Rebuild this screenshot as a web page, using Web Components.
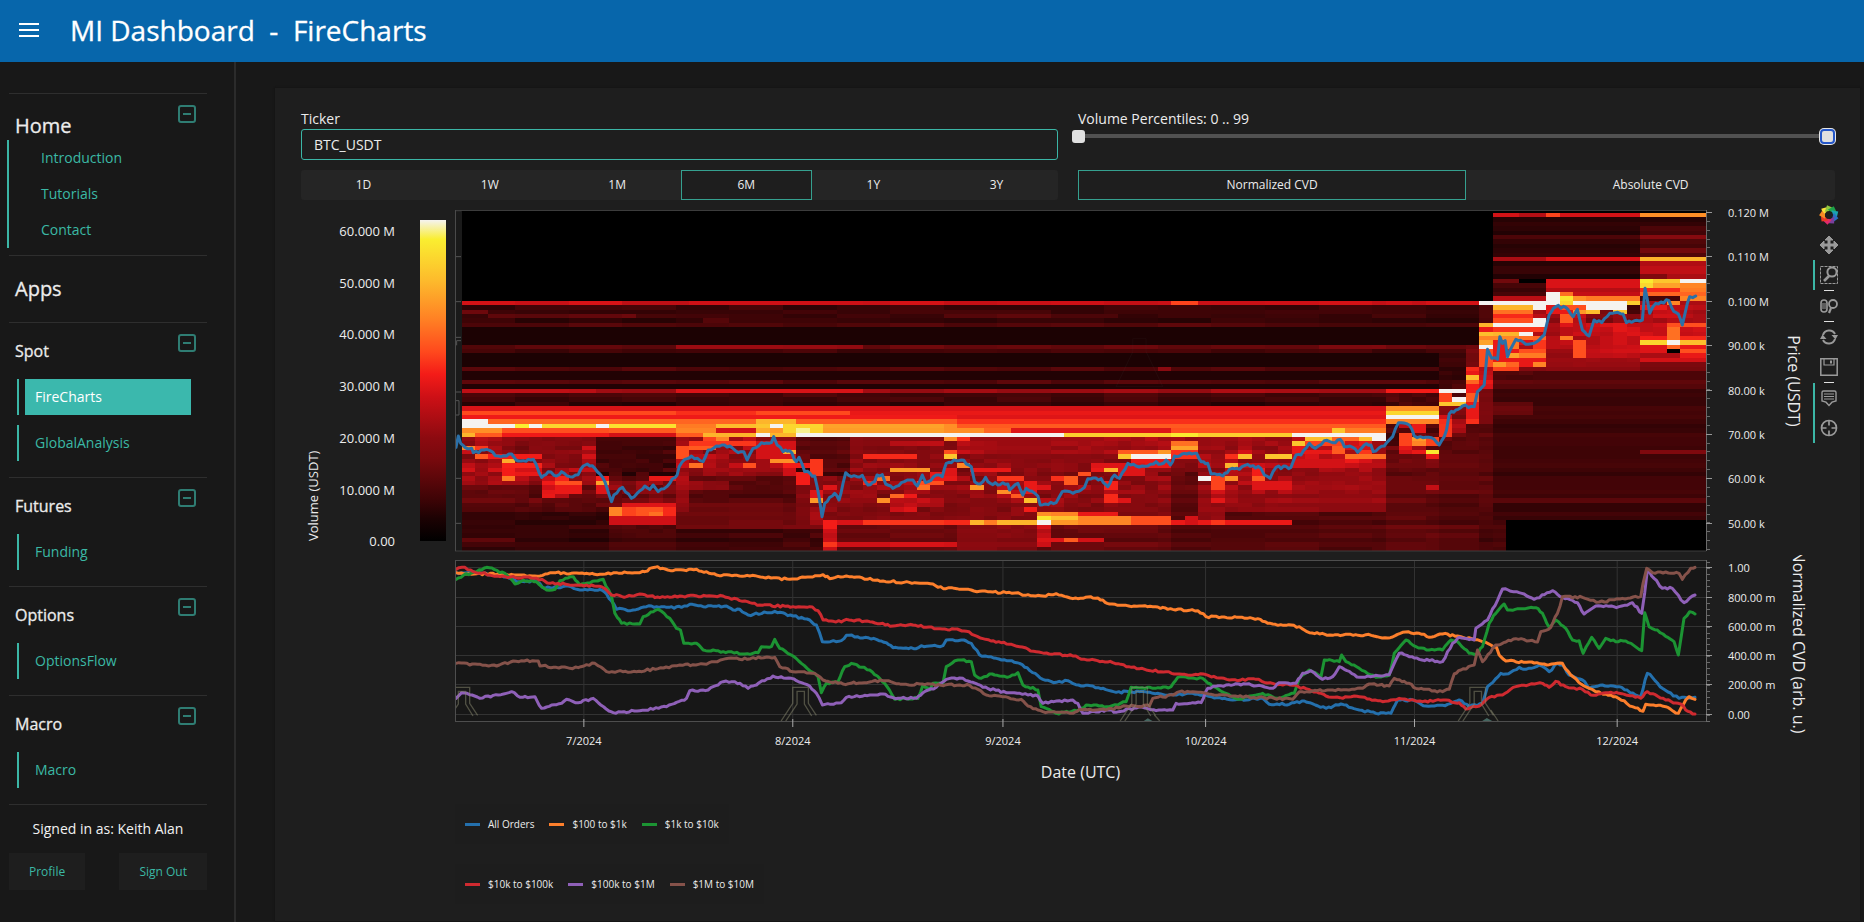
<!DOCTYPE html>
<html lang="en">
<head>
<meta charset="utf-8">
<title>MI Dashboard - FireCharts</title>
<style>
    html, body { height: 100%; }
    body {
        margin: 0;
        background: #181818;
        color: #ececec;
        font-family: "Open Sans", "Noto Sans", sans-serif;
        font-size: 14px;
        line-height: 20px;
        overflow: hidden;
        --accent: #3bb6a6;
        --surface: #1e1e1e;
        --raised: #252525;
        --rule: #2e2e2e;
    }
</style>
</head>
<body>
<mi-dashboard>
    <app-header slot="header" app="MI Dashboard" page="FireCharts"></app-header>
    <nav-sidebar slot="sidebar">
        <nav-section size="large" heading="Home">
            <nav-link>Introduction</nav-link>
            <nav-link>Tutorials</nav-link>
            <nav-link>Contact</nav-link>
        </nav-section>
        <nav-title>Apps</nav-title>
        <nav-section heading="Spot">
            <nav-link active>FireCharts</nav-link>
            <nav-link>GlobalAnalysis</nav-link>
        </nav-section>
        <nav-section heading="Futures"><nav-link>Funding</nav-link></nav-section>
        <nav-section heading="Options"><nav-link>OptionsFlow</nav-link></nav-section>
        <nav-section heading="Macro"><nav-link>Macro</nav-link></nav-section>
        <user-panel slot="footer" user="Keith Alan"></user-panel>
    </nav-sidebar>
    <div style="display: contents">
        <chart-controls>
            <ticker-input slot="left" value="BTC_USDT"></ticker-input>
            <percentile-slider slot="right" low="0" high="99"></percentile-slider>
            <radio-buttons slot="left" options="1D,1W,1M,6M,1Y,3Y" value="6M"></radio-buttons>
            <radio-buttons slot="right" options="Normalized CVD,Absolute CVD" value="Normalized CVD"></radio-buttons>
        </chart-controls>
        <fire-chart></fire-chart>
    </div>
</mi-dashboard>

<script>
class BaseElement extends HTMLElement {
    constructor() {
        super();
        this.attachShadow({ mode: 'open' });
    }

    connectedCallback() {
        this.shadowRoot.innerHTML = this.render();
        this.ready();
    }

    ready() {}
}

// ---------- page shell ----------

class MiDashboard extends BaseElement {
    render() {
        return `
            <style>
                :host { display: flex; flex-direction: column; height: 100vh; }
                .body { display: flex; flex: 1; min-height: 0; }
                main { flex: 1; min-width: 0; padding: 26px 4px 0 39px; }
                .card {
                    background: var(--surface);
                    padding-top: 20px;
                    height: calc(100% - 21px);
                    box-shadow: 0 0 2px #111;
                }
            </style>
            <slot name="header"></slot>
            <div class="body">
                <slot name="sidebar"></slot>
                <main><div class="card"><slot></slot></div></main>
            </div>`;
    }
}

class AppHeader extends BaseElement {
    render() {
        return `
            <style>
                :host { display: block; }
                header {
                    display: flex;
                    align-items: center;
                    height: 60px;
                    padding: 0 0 2px 14px;
                    background: #0766ab;
                    color: #fff;
                }
                button { border: 0; background: none; padding: 0; width: 30px; height: 30px; display: grid; place-items: center; }
                h1 { margin: 0 0 0 26px; font-size: 28px; line-height: 40px; font-weight: 400; white-space: pre; -webkit-text-stroke: 0.3px; }
            </style>
            <header>
                <button aria-label="Toggle sidebar">
                    <svg width="20" height="14" stroke="#fff" stroke-width="2"><path d="M0 1h20M0 7h20M0 13h20"/></svg>
                </button>
                <h1>${this.getAttribute('app')}  -  ${this.getAttribute('page')}</h1>
            </header>`;
    }
}

// ---------- sidebar ----------

class NavSidebar extends BaseElement {
    render() {
        return `
            <style>
                :host {
                    display: block;
                    box-sizing: border-box;
                    width: 236px;
                    padding: 31px 27px 0 9px;
                    border-right: 2px solid #2b2b2b;
                }
            </style>
            <nav><slot></slot></nav>
            <slot name="footer"></slot>`;
    }
}

class NavTitle extends BaseElement {
    render() {
        return `
            <style>
                :host { display: block; border-top: 1px solid var(--rule); }
                h2 { margin: 0; padding-left: 6px; font-size: 20px; font-weight: 400; line-height: 66px; -webkit-text-stroke: 0.3px; }
            </style>
            <h2><slot></slot></h2>`;
    }
}

class NavSection extends BaseElement {
    render() {
        return `
            <style>
                :host { display: block; border-top: 1px solid var(--rule); }
                .head { display: flex; justify-content: space-between; height: 56px; padding: 0 11px 0 6px; }
                h3 { margin: 0; font-size: 16px; font-weight: 400; line-height: 56px; -webkit-text-stroke: 0.3px; }
                button {
                    width: 18px; height: 18px; margin-top: 11px; padding: 0;
                    display: grid; place-items: center;
                    background: none; border: 2px solid #2f7d73; border-radius: 3px;
                }
                button::before { content: ""; width: 8px; height: 2px; background: #2f7d73; }
                .links { display: flex; flex-direction: column; gap: 10px; padding: 0 16px 16px 8px; }

                :host([size="large"]) .head { height: 46px; }
                :host([size="large"]) h3 { font-size: 20px; line-height: 64px; }
                :host([size="large"]) .links {
                    gap: 0; margin: 0 0 7px -2px; padding: 0 0 0 14px;
                    border-left: 2px solid var(--accent);
                    --bar: transparent;
                }
            </style>
            <div class="head">
                <h3>${this.getAttribute('heading')}</h3>
                <button aria-label="Collapse ${this.getAttribute('heading')}"></button>
            </div>
            <div class="links"><slot></slot></div>`;
    }
}

class NavLink extends BaseElement {
    render() {
        return `
            <style>
                :host { display: block; border-left: 2px solid var(--bar, var(--accent)); padding-left: 6px; }
                a { display: block; padding: 0 10px; line-height: 36px; color: #3bb8a5; text-decoration: none; }
                :host([active]) a { background: #3bb8ad; color: #fff; }
            </style>
            <a href="#"><slot></slot></a>`;
    }
}

class UserPanel extends BaseElement {
    render() {
        return `
            <style>
                :host { display: block; border-top: 1px solid var(--rule); text-align: center; }
                p { margin: 14px 0; color: #f2f2f2; }
                div { display: flex; justify-content: space-between; }
                a {
                    padding: 0 20px;
                    font-size: 12px; line-height: 37px;
                    background: var(--surface); color: #3bb8a5; text-decoration: none;
                }
            </style>
            <p>Signed in as: ${this.getAttribute('user')}</p>
            <div><a href="#">Profile</a><a href="#">Sign Out</a></div>`;
    }
}

// ---------- controls ----------

class ChartControls extends BaseElement {
    render() {
        return `
            <style>
                :host { display: flex; gap: 20px; padding: 0 25px 0 26px; }
                .col { flex: 1; min-width: 0; display: flex; flex-direction: column; justify-content: space-between; height: 92px; }
            </style>
            <div class="col"><slot name="left"></slot></div>
            <div class="col"><slot name="right"></slot></div>`;
    }
}

class TickerInput extends BaseElement {
    render() {
        return `
            <style>
                :host { display: block; }
                label { display: block; line-height: 21px; }
                input {
                    box-sizing: border-box; width: 100%; height: 31px;
                    padding: 0 12px;
                    background: var(--surface); color: inherit; font: inherit;
                    border: 1px solid var(--accent); border-radius: 3px;
                }
            </style>
            <label for="ticker">Ticker</label>
            <input id="ticker" value="${this.getAttribute('value')}">`;
    }
}

class PercentileSlider extends BaseElement {
    render() {
        const low = this.getAttribute('low');
        const high = this.getAttribute('high');
        return `
            <style>
                :host { display: block; }
                label { display: block; line-height: 21px; }
                .track {
                    display: grid; align-items: center; height: 13px; margin: 0 0 0 -6px;
                    background: linear-gradient(#515151, #515151) center / calc(100% - 12px) 4px no-repeat;
                }
                input {
                    grid-area: 1 / 1; width: 100%; height: 15px; margin: 0;
                    appearance: none; background: none; pointer-events: none;
                }
                input::-webkit-slider-thumb {
                    appearance: none; pointer-events: auto;
                    width: 13px; height: 13px; border-radius: 3px; background: #e0e0e0;
                }
                input.high::-webkit-slider-thumb {
                    width: 15px; height: 15px;
                    border: 2px solid #2456c8;
                    border-radius: 4px;
                    box-shadow: 0 0 0 1px #e8e8e8;
                }
            </style>
            <label for="low">Volume Percentiles: ${low} .. ${high}</label>
            <div class="track">
                <input id="low" type="range" min="0" max="99" value="${low}">
                <input class="high" type="range" min="0" max="99" value="${high}" aria-label="Upper percentile">
            </div>`;
    }
}

class RadioButtons extends BaseElement {
    render() {
        const value = this.getAttribute('value');
        return `
            <style>
                :host { display: flex; height: 30px; background: var(--raised); border-radius: 3px; }
                button {
                    flex: 1 1 auto; padding: 0 10px;
                    background: none; border: 1px solid transparent;
                    color: inherit; font: inherit; font-size: 12px; line-height: 28px;
                }
                button[aria-pressed="true"] { background: var(--surface); border-color: #35a08f; padding: 0 12px; }
            </style>
            ${this.getAttribute('options').split(',').map(o => `
                <button aria-pressed="${o === value}">${o}</button>`).join('')}`;
    }

    ready() {
        const buttons = this.shadowRoot.querySelectorAll('button');
        buttons.forEach(b => b.addEventListener('click', () => {
            buttons.forEach(x => x.setAttribute('aria-pressed', x === b));
        }));
    }
}

// ---------- chart data ----------

// Each track is a list of chunks: x offset, y offset, "x,y x,y ..."
const LINES = {
    price: { color: '#2b70a8', data: [
        [-45, -30, '48,742 55,708 62,730 75,742 95,745 100,758 140,748 175,768 215,762 235,783 280,778 305,832 325,815 350,828 365,815 390,830 415,824 430,798 442,792 465,805 495,845 515,905 522,885 548,862 575,895 615,858 630,868 640,855 655,875 690,850 712,825 718,800 735,778 755,768 790,785 805,750 830,738 870,738 895,758 912,755 922,780 940,745 965,728 995,728 1002,710 1012,735 1030,755 1050,752 1070,785 1078,772 1095,815 1125,828 1138,890 1147,950 1155,910 1185,880 1198,900 1210,850 1218,818 1235,830 1268,826 1285,855 1305,845 1312,825 1328,824 1338,852 1360,865 1385,848 1420,840 1433,858 1448,825 1458,848 1490,825 1508,830 1520,790 1550,782'],
        [1455, -30, '65,780 95,800 105,845 122,852 138,832 152,850 205,852 210,870 235,850 250,885 260,865 295,888 302,915 350,908 368,875 400,880 435,862 445,836 485,836 505,860 525,825 540,835 565,790 590,798 625,798 650,785 665,792 680,780 693,795 705,768 735,760 772,760 785,785 805,790 815,822 850,828 870,808 900,808 925,793 965,806 975,825 992,835 1010,802 1055,802 1070,765 1085,765 1110,730 1128,745 1155,722 1180,728 1203,718 1215,740 1240,742 1255,757 1275,735 1295,735 1302,755 1335,738 1360,710 1378,668 1410,675 1425,708 1460,712 1485,718 1500,735 1515,710 1522,690 1530,642 1550,630'],
        [2895, -30, '130,618 165,620 175,575 195,555 205,448 218,475 235,478 242,410 250,430 258,422 265,470 290,418 320,433 345,430 375,405 390,345 410,320 440,322 462,350 475,328 490,390 510,408 525,360 548,368 572,340 612,342 622,368 670,360 678,265 692,340 710,310 750,302 765,335 778,342 790,375 805,310 812,290 830,288'],
    ] },
    all: { label: 'All Orders', color: '#2470ad', data: [
        [-45, -30, '48,68 130,70 200,80 230,95 285,92 315,115 385,108 420,120 480,118 500,132 530,178 580,180 620,170 680,172 725,172 750,163 790,170 860,168 880,180 900,178 925,195 1005,184 1060,198 1110,210 1130,225 1148,275 1205,272 1220,256 1310,268 1340,278 1360,293 1430,296 1445,287 1510,287 1520,270 1555,272'],
        [1455, -30, '65,270 95,280 120,315 170,325 240,340 310,388 350,397 385,392 425,408 445,406 530,427 600,425 680,436 760,430 880,450 970,445 990,463 1050,463 1095,453 1160,475 1205,462 1260,480 1310,490 1355,490 1375,450 1420,450 1460,468 1510,466 1555,452'],
        [2895, -60, '120,480 150,500 190,490 205,440 245,400 260,402 300,382 320,388 360,375 390,395 415,370 430,375 450,405 490,420 510,445 550,435 600,440 665,470 685,400 700,412 730,445 780,475 828,472'],
    ] },
    s100: { label: '$100 to $1k', color: '#fd7f2c', data: [
        [-45, -30, '48,68 230,75 300,78 340,68 480,73 530,68 600,68 645,52 700,62 770,58 830,75 930,78 1050,88 1150,74 1170,86 1220,78 1330,93 1480,102 1495,112 1560,118'],
        [1455, -30, '70,118 120,124 200,128 235,128 250,136 310,138 350,131 400,146 445,141 490,150 510,162 560,166 640,170 700,178 775,182 800,200 940,205 1000,222 1080,230 1110,248 1180,256 1280,254 1345,264 1390,247 1440,250 1470,262 1510,252 1555,258'],
        [2895, -60, '125,290 190,305 215,315 232,322 240,345 260,363 330,366 390,374 430,370 455,405 495,438 530,455 590,470 640,500 672,514 680,493 740,500 778,520 800,480 810,470 828,478'],
    ] },
    s1k: { label: '$1k to $10k', color: '#1c9433', data: [
        [-45, -30, '48,88 70,76 110,65 140,52 195,70 225,102 250,90 290,95 320,120 345,118 360,92 400,80 420,105 480,90 490,88 515,140 525,190 545,220 600,222 610,200 655,178 690,205 710,235 722,240 732,280 770,280 790,300 850,305 915,312 955,308 965,290 995,290 1005,268 1020,295 1060,318 1085,340 1120,368 1135,380 1145,428 1160,400 1195,395 1215,350 1235,340 1290,360 1335,400 1365,448 1435,445 1450,405 1470,420 1480,400 1510,400 1520,350 1555,330'],
        [1455, -30, '65,330 95,335 105,375 125,385 150,372 210,380 235,368 250,405 295,420 305,470 350,490 420,480 440,465 510,470 560,455 575,412 640,415 695,410 715,382 790,385 820,410 860,430 900,448 970,430 1010,445 1065,430 1080,385 1110,360 1145,380 1155,330 1200,335 1207,315 1220,335 1260,355 1310,382 1350,375 1365,310 1400,270 1430,290 1470,300 1510,300 1535,270 1555,275'],
        [2895, -60, '120,310 150,340 170,345 190,320 210,250 230,220 255,192 265,210 350,203 370,220 390,262 410,240 440,265 460,300 480,302 492,340 518,292 540,325 560,295 590,305 620,303 668,332 677,218 690,260 715,270 765,305 778,345 795,235 812,215 828,222'],
    ] },
    s10k: { label: '$10k to $100k', color: '#cf2a30', data: [
        [-45, -30, '48,58 75,52 100,65 180,80 290,85 330,100 440,105 485,110 515,135 560,140 600,132 660,143 720,138 800,138 850,138 900,152 960,165 1060,170 1110,170 1135,182 1150,210 1205,216 1220,208 1290,215 1360,228 1420,225 1500,236 1560,240'],
        [1455, -30, '80,244 130,266 240,290 290,305 400,318 435,328 520,338 600,356 720,372 800,374 870,390 950,388 1000,400 1060,406 1100,416 1160,438 1210,445 1245,438 1330,455 1380,445 1450,455 1520,450 1555,460'],
        [2895, -60, '120,488 140,507 185,495 210,472 250,465 290,440 370,430 390,442 410,424 440,440 490,448 515,465 560,458 600,460 665,475 685,455 740,480 785,492 800,510 828,522'],
    ] },
    s100k: { label: '$100k to $1M', color: '#8f60b8', data: [
        [-45, -30, '48,445 65,428 120,445 215,425 240,442 285,440 305,475 365,460 380,448 415,458 460,445 500,478 520,488 600,482 680,470 740,445 750,422 805,420 850,395 885,395 925,415 1000,378 1055,385 1085,398 1110,408 1130,430 1148,465 1205,458 1220,442 1330,432 1360,443 1430,445 1450,428 1490,412 1520,388 1560,384'],
        [1455, -30, '70,385 130,412 200,428 265,435 295,438 310,460 400,450 415,460 430,490 510,480 530,487 600,470 650,482 700,480 710,460 785,458 805,415 860,405 920,402 1000,415 1020,398 1070,400 1090,370 1115,362 1150,388 1180,380 1200,350 1260,382 1350,374 1380,310 1440,328 1510,335 1540,280 1555,265'],
        [2895, -60, '120,292 165,300 170,265 205,240 250,147 300,158 345,178 400,152 430,172 475,188 495,222 530,198 600,200 640,188 668,220 685,90 705,115 730,145 760,145 795,188 828,165'],
    ] },
    s1m: { label: '$1M to $10M', color: '#85524a', data: [
        [-45, -30, '48,340 170,348 220,333 295,333 300,348 390,355 465,340 500,365 590,365 720,345 800,343 850,328 1005,322 1020,350 1060,365 1125,370 1150,390 1210,402 1330,392 1400,403 1560,405'],
        [1455, -30, '90,406 140,435 245,448 265,468 310,485 400,490 420,478 500,480 560,468 630,468 640,445 700,435 720,425 800,430 880,438 1060,448 1080,425 1180,420 1270,415 1290,402 1350,408 1365,385 1410,400 1430,415 1510,425 1530,418 1545,372'],
        [2895, -60, '125,390 165,375 175,330 190,365 230,315 290,296 355,306 365,275 395,262 415,220 430,170 490,172 540,186 665,170 672,130 683,85 700,98 780,100 790,118 815,85 828,82'],
    ] },
};

const COLS = 93;
const ROWS = 78;

// Order book intensity, 0..100: [first col, end col, first row, end row, value].
// Later entries paint over earlier ones. A row is 1000 USDT, row 0 is 119-120k.
const HEAT = [
    // far book
    [0,77,20,21,42],[17,30,20,21,45],[53,55,20,21,58],[69,71,20,21,45],[0,77,21,24,11],[0,2,22,23,21],[2,13,23,24,19],[36,49,23,24,16],
    [0,77,24,25,12],[18,20,24,25,19],[0,77,25,26,15],[0,77,26,30,7],[0,77,30,31,22],[0,16,30,31,20],[16,30,30,31,35],[64,69,30,31,27],
    [0,77,31,32,12],[0,77,32,35,7],[0,77,35,36,18],[52,53,35,36,32],[0,77,36,38,8],[0,77,38,39,15],[0,77,39,40,8],
    [0,77,40,41,37],[0,10,40,41,42],[16,30,40,41,47],[0,77,41,43,15],[0,77,43,44,12],[0,77,44,45,47],
    [0,77,45,46,50],[0,16,45,46,59],[16,22,45,46,55],[22,29,45,46,59],[0,77,46,47,48],[0,37,46,47,51],
    [0,77,47,48,55],[2,22,47,48,64],[0,2,47,48,100],[22,25,47,48,80],[25,37,47,48,62],
    // near book
    [0,77,48,49,62],[0,4,48,49,100],[4,5,48,49,94],[5,6,48,49,100],[6,10,48,49,88],[10,11,48,49,100],[11,16,48,49,91],[16,19,48,49,68],[19,22,48,49,82],
    [22,23,48,49,84],[23,24,48,49,100],[24,27,48,49,88],[27,36,48,49,76],[36,37,48,49,72],
    [0,77,49,50,48],[0,3,49,50,72],[3,11,49,50,60],[11,16,49,50,62],[16,19,49,50,70],[19,22,49,50,46],[22,23,49,50,78],[23,24,49,50,74],[24,25,49,50,88],[25,26,49,50,97],
    [26,27,49,50,87],[27,36,49,50,75],[36,39,49,50,72],[39,41,49,50,64],[53,65,49,50,60],[65,66,49,50,84],[66,69,49,50,68],
    [0,1,50,51,80],[1,3,50,51,62],[3,11,50,51,51],[11,16,50,51,46],[16,18,50,51,62],[18,22,50,51,80],[22,23,50,51,100],[23,25,50,51,80],[25,45,50,51,100],
    [45,53,50,51,86],[53,55,50,51,93],[55,62,50,51,86],[62,69,50,51,100],
    // background below price
    [0,11,51,62,33],[0,11,62,68,20],[0,11,68,77,12],[3,10,51,58,28],[10,16,51,61,13],[11,16,61,68,24],[11,16,68,71,45],[11,16,71,77,16],
    [16,25,51,60,34],[16,25,60,66,17],[16,27,66,72,25],[16,27,72,77,14],[22,25,52,56,46],[25,37,51,71,29],[25,29,51,60,17],[27,37,71,77,22],
    [37,53,51,71,30],[37,53,71,77,22],[37,53,51,55,36],[53,69,51,68,34],[53,55,57,71,20],[55,69,68,77,18],[53,55,71,77,18],[69,73,53,77,21],[73,77,50,77,19],[69,77,48,53,18],
    [37,43,71,77,30],[0,4,74,75,20],
    // highlights, June to August
    [0,1,53,54,70],[1,2,53,54,56],[1,3,55,56,62],[2,6,55,56,52],[3,4,56,57,78],[0,3,57,60,38],[3,6,57,58,53],[3,4,58,60,52],[3,4,60,61,68],[4,6,59,60,50],[4,6,58,59,46],
    [6,8,60,65,42],[7,9,61,62,60],[7,9,62,64,50],[6,7,64,65,50],[9,10,53,56,41],[10,11,61,62,76],[10,11,60,61,52],[10,11,62,64,48],[11,12,67,69,70],[12,13,67,69,58],[12,16,66,67,48],[13,15,67,69,61],[14,15,68,69,66],[15,16,67,69,54],
    [14,16,60,61,50],[13,15,61,62,40],[16,17,53,56,60],[17,19,53,54,62],[17,18,57,58,66],[17,19,52,53,56],[19,20,51,52,70],[18,19,51,52,58],[19,22,52,53,56],[21,22,57,58,60],[16,17,60,68,34],[17,20,61,63,30],
    [23,25,56,57,72],[24,25,54,55,78],[24,26,57,58,52],[25,26,59,62,52],[24,25,58,60,45],[26,27,56,60,56],[26,27,65,66,74],[26,27,63,65,48],[27,28,70,72,52],[27,28,72,77,44],[27,28,75,76,56],[27,28,62,63,48],
    [30,34,55,56,54],[32,35,58,59,74],[31,32,60,61,66],[30,31,61,62,54],[32,34,64,68,44],[31,32,65,66,72],[32,33,64,65,64],[34,35,62,63,66],[34,36,61,62,60],[35,37,59,61,50],[36,37,54,55,60],[36,37,55,56,84],[36,37,51,52,72],
    [28,30,70,71,47],[30,37,70,71,56],[28,37,75,76,44],[32,36,52,53,40],[34,36,65,67,40],
    // highlights, August to October
    [37,38,51,52,55],[37,38,57,58,70],[36,37,58,60,48],[38,41,58,59,50],[40,42,60,61,56],[38,39,62,63,74],[40,41,63,64,72],[41,42,64,65,62],[42,43,65,66,82],[42,43,61,64,50],[43,44,62,63,48],[42,43,67,68,52],
    [36,38,70,71,54],[38,39,70,71,80],[39,40,70,71,68],[40,43,70,71,80],[43,44,68,69,72],[43,44,69,70,92],[43,44,70,71,100],[43,44,71,76,44],[44,46,68,69,70],[44,46,69,70,83],[44,46,70,71,74],[46,49,68,69,50],[46,50,69,71,70],[50,53,69,71,60],[45,46,74,75,62],[43,45,74,75,48],[46,48,74,75,46],
    [44,46,60,61,55],[45,46,60,62,62],[46,47,59,60,60],[47,48,58,59,50],[48,49,58,59,80],[47,49,57,58,48],[48,49,61,63,53],[48,49,64,66,54],[49,50,65,66,48],[49,50,55,56,84],[50,53,55,56,100],[49,52,54,55,62],[52,53,54,55,74],[50,53,56,58,50],[49,51,57,60,48],
    [53,55,52,53,66],[53,55,53,54,76],[53,55,54,56,55],[53,62,70,71,50],[54,55,69,71,46],[55,56,60,61,100],[56,57,60,63,58],[57,58,57,58,80],[57,58,60,61,72],[57,58,55,56,55],[58,59,55,56,82],[58,59,54,55,46],[60,62,55,56,84],[59,60,60,61,62],[59,60,58,60,52],[59,62,61,63,48],
    [56,57,63,66,44],[56,57,70,71,56],[55,57,66,70,34],
    // highlights, October to mid November
    [62,69,51,57,40],[62,63,52,53,84],[63,65,51,52,82],[63,66,52,53,58],[65,68,51,52,64],[67,68,51,52,82],[68,69,51,52,100],[65,66,53,55,62],[62,65,54,55,50],[66,69,55,56,66],[66,67,53,55,40],[67,68,54,55,56],[62,66,56,58,46],
    [69,73,40,41,52],[69,73,41,44,16],[69,73,44,45,72],[69,73,45,46,88],[69,73,46,47,100],[69,73,47,48,70],[69,70,48,53,14],[70,71,48,49,40],[70,71,50,53,58],[71,72,48,50,50],[71,72,51,52,74],[71,72,52,55,70],[72,73,51,53,58],[72,73,54,55,92],[72,73,55,56,50],[70,72,53,55,42],[72,73,62,63,42],
    [73,77,31,40,12],[73,75,40,41,100],[73,74,41,43,58],[74,75,42,43,100],[73,75,43,44,84],[73,77,44,47,26],[73,74,46,47,46],[75,76,46,47,50],[73,74,48,51,56],[74,75,47,50,40],
    [75,76,35,36,54],[75,76,36,37,50],[75,76,37,38,82],[75,76,38,39,64],[75,76,39,41,52],[75,76,41,43,62],[75,76,43,46,50],[75,76,30,35,24],
    // price discovery
    [77,93,1,15,10],[77,93,5,6,18],[77,88,0,1,46],[79,81,0,1,40],[81,82,0,1,58],[88,93,0,1,72],[88,93,3,10,16],[88,93,5,6,32],[88,93,8,9,24],[77,81,10,11,38],[81,88,10,11,47],[88,93,10,11,80],[88,93,11,15,40],[88,90,14,15,30],
    [77,79,15,16,24],[77,81,16,19,14],[77,81,19,20,40],[81,88,15,17,47],[81,88,17,20,42],[88,89,15,16,93],[89,91,15,16,84],[91,93,15,16,100],[88,89,16,17,88],[89,91,16,17,76],[91,93,16,17,70],[88,91,17,18,54],[91,93,17,18,68],
    [88,93,18,19,64],[88,91,19,20,14],[91,93,19,20,70],[76,77,20,21,100],[76,77,21,25,16],[76,77,25,26,80],[76,77,26,27,50],[76,77,27,28,82],[76,77,28,29,70],[76,77,29,30,76],[76,77,30,31,100],[76,77,31,35,60],[76,77,35,40,44],[76,77,40,48,26],
    [77,88,21,31,42],[77,88,31,37,33],[77,81,20,21,100],[77,81,21,22,80],[77,81,22,23,66],[77,81,23,24,54],[77,81,24,25,60],[77,80,25,26,100],[80,81,20,22,100],[80,81,22,24,36],[80,81,24,26,100],[77,79,26,27,50],[77,81,26,27,56],[77,80,27,28,80],[79,80,27,28,100],[77,79,28,29,70],[79,81,28,29,66],
    [77,78,29,32,50],[77,81,31,35,50],[77,78,34,35,74],[78,79,29,31,68],[78,79,32,33,76],[79,81,31,32,60],[79,81,32,33,68],[80,81,29,31,56],[80,81,34,35,70],[78,79,34,35,64],[77,79,35,36,58],[79,81,35,37,28],[80,81,28,29,64],
    [81,82,18,21,100],[82,83,18,19,66],[82,83,19,20,92],[83,84,19,20,72],[84,88,19,20,68],[82,83,20,21,88],[83,88,20,21,100],[87,88,20,21,86],[82,84,21,22,60],[84,87,21,22,100],[83,84,22,23,74],[84,85,22,23,82],[86,87,22,23,84],[82,83,23,25,62],[81,83,22,23,50],
    [87,88,21,23,14],[85,86,22,23,20],[82,83,28,29,68],[83,84,29,33,60],[84,85,31,32,50],[81,82,23,28,34],[84,88,23,25,28],[86,87,27,30,46],[84,88,31,33,42],
    [88,93,20,25,36],[90,91,20,21,70],[88,90,21,22,50],[89,91,23,24,46],[88,93,25,29,42],[90,93,25,26,60],[90,91,26,29,66],[91,93,28,29,54],[88,90,28,29,52],[88,90,29,30,88],[90,91,29,30,100],[91,93,29,30,82],[88,90,30,32,48],[90,91,30,31,64],[91,93,30,33,50],[91,93,31,32,60],[88,91,32,33,38],[88,93,33,34,46],[88,93,34,36,26],
    [77,93,36,70,13],[77,93,36,40,18],[77,80,43,46,21],[88,93,54,55,28],[77,93,65,66,18],[77,93,68,69,15],[76,78,70,78,16],[78,93,70,78,0],
];

// [position, r, g, b]
const FIRE = [
    [0, 0, 0, 0], [7, 28, 2, 3], [13, 62, 4, 6], [25, 118, 9, 13], [32, 140, 10, 16], [45, 206, 16, 22], [52, 244, 28, 24],
    [59, 255, 73, 29], [69, 255, 128, 36], [81, 253, 186, 44], [94, 250, 238, 48], [100, 245, 243, 240],
];

function fireColor(value) {
    const i = Math.max(1, FIRE.findIndex(s => s[0] >= value));
    const a = FIRE[i - 1];
    const b = FIRE[i];
    const t = (value - a[0]) / (b[0] - a[0]);
    return `rgb(${[1, 2, 3].map(k => Math.round(a[k] + (b[k] - a[k]) * t)).join()})`;
}

function hash(x, y) {
    const s = Math.sin(x * 127.1 + y * 311.7) * 43758.5453;
    return s - Math.floor(s);
}

function trackPoints(data) {
    return data.flatMap(([dx, dy, text]) =>
        text.split(' ').map(p => p.split(',').map(Number)).map(([x, y]) => [x + dx, y + dy]));
}

// Adds small steps between the sampled points.
function roughen(points, size, seed) {
    const out = [points[0]];
    for (let i = 1; i < points.length; i++) {
        const [x0, y0] = points[i - 1];
        const [x1, y1] = points[i];
        const n = Math.max(1, Math.round((x1 - x0) / 8));
        for (let k = 1; k <= n; k++) {
            const t = k / n;
            const j = k < n ? (hash(x0 + k, seed) - 0.5) * size : 0;
            out.push([x0 + (x1 - x0) * t, y0 + (y1 - y0) * t + j]);
        }
    }
    return out;
}

function polyline(key, width, size, seed) {
    const points = roughen(trackPoints(LINES[key].data), size, seed);
    return `<polyline fill="none" stroke="${LINES[key].color}" stroke-width="${width}" stroke-linejoin="round"
        stroke-linecap="round" vector-effect="non-scaling-stroke"
        points="${points.map(p => p.map(v => v.toFixed(0)).join()).join(' ')}"/>`;
}

function heatRects() {
    const grid = Array.from({ length: ROWS }, () => new Array(COLS).fill(0));
    for (const [c0, c1, r0, r1, v] of HEAT) {
        for (let r = r0; r < r1; r++) {
            for (let c = c0; c < c1; c++) grid[r][c] = v;
        }
    }

    // price row for each column
    const priceRow = new Array(COLS).fill(0);
    for (const [x, y] of roughen(trackPoints(LINES.price.data), 0, 0)) {
        priceRow[Math.min(COLS - 1, Math.max(0, Math.floor((x - 20) / 40.2)))] = (y - 9) / 13.17;
    }

    let out = '';
    for (let r = 0; r < ROWS; r++) {
        let start = 0;
        let current = null;
        for (let c = 0; c <= COLS; c++) {
            let color = null;
            if (c < COLS) {
                let v = grid[r][c];
                if (v > 9 && v < 45) {
                    const base = v;
                    v += (hash(r, 3) - 0.5) * 5;
                    const near = Math.abs(r - priceRow[c]);
                    if (near < 9 && r > 20) v += (hash(c, r) - 0.4) * (20 - near * 2) * (c < 76 ? 1 : 0.6);
                    else if (c < 77) v += (hash(Math.floor(c / 4), r) - 0.5) * 5;
                    v = Math.max(v, base * 0.6);
                }
                color = fireColor(Math.max(0, Math.round(v)));
            }
            if (color !== current) {
                if (current) {
                    out += `<rect x="${20 + start * 40.2}" y="${9 + r * 13.17}" width="${(c - start) * 40.2}" height="13.2" fill="${current}"/>`;
                }
                current = color;
                start = c;
            }
        }
    }
    return out;
}

// ---------- chart ----------

const MONTHS = [['10.3%', '7/2024'], ['27%', '8/2024'], ['43.8%', '9/2024'], ['60%', '10/2024'], ['76.7%', '11/2024'], ['92.9%', '12/2024']];

class HeatmapPlot extends BaseElement {
    render() {
        return `
            <style>
                :host { display: block; height: 355px; }
                svg { display: block; overflow: hidden; }
            </style>
            <svg width="100%" height="355">
                <rect y="10" width="100%" height="341" fill="#1a1a1a"/>
                <svg y="10" width="100%" height="341" viewBox="0 0 3756 1023" preserveAspectRatio="none">
                    <g shape-rendering="crispEdges">
                        <rect x="20" width="3736" height="10"/>
                        ${heatRects()}
                    </g>
                    <g fill="none" stroke="#555" stroke-width="3">
                        <path d="M2 2H18M0 140H18M0 275H18M0 382H18M5 406V392H18M0 546H18M0 572H12V615H0M0 805H18M0 940H18"/>
                        <path opacity=".1" d="M2035 385V425L1985 530H2125L2075 425V385Z"/>
                    </g>
                    ${polyline('price', 3, 9, 5)}
                </svg>
                <path d="M0 10.5H4000M0 351H4000" stroke="#3c3c3c"/>
                <path d="M.5 10V351" stroke="#4a4a4a"/>
            </svg>`;
    }
}

class CvdPlot extends BaseElement {
    render() {
        const order = ['all', 's100', 's1k', 's10k', 's100k', 's1m'];
        return `
            <style>
                :host { display: block; height: 240px; }
                svg { display: block; overflow: hidden; }
                text { fill: #ececec; font-size: 11px; text-anchor: middle; }
                .title { font-size: 16px; }
            </style>
            <svg width="100%" height="240">
                <rect y="5" width="100%" height="161" fill="#171717"/>
                <path stroke="#333" d="M0 12.5H4000M0 42.5H4000M0 71.5H4000M0 100.5H4000M0 129.5H4000M0 159.5H4000"/>
                ${MONTHS.map(([x]) => `<line x1="${x}" x2="${x}" y1="5" y2="166" stroke="#333"/>`).join('')}
                <svg y="5" width="100%" height="161" viewBox="0 0 3756 483" preserveAspectRatio="none">
                    ${order.map((key, i) => polyline(key, 3, 6, i)).join('')}
                    <g fill="none" stroke="#8a8a70" stroke-opacity=".5" stroke-width="4">
                        ${[20, 1037, 2055, 3070].map(x => `
                            <g transform="translate(${x} 0)">
                                <path d="M-58 483L-23 430V382H24V430L48 466M-44 483L-10 432V394H12V432L34 468"/>
                            </g>`).join('')}
                        <path d="M2100 465l16 18M3110 450l22 33"/>
                    </g>
                    <path fill="#456660" d="M2068 483l12-8 14 8zM3084 483l14-9 16 9z"/>
                </svg>
                <path d="M0 5.5H4000M0 166.5H4000M.5 5V166" stroke="#4e4e4e"/>
                ${MONTHS.map(([x, label]) => `
                    <line x1="${x}" x2="${x}" y1="164" y2="172" stroke="#aaa"/>
                    <text x="${x}" y="190">${label}</text>`).join('')}
                <text class="title" x="50%" y="223">Date (UTC)</text>
            </svg>`;
    }
}

// Attributes: ticks "y:label,...", minor step, axis span and title position.
class ValueAxis extends BaseElement {
    render() {
        const num = name => Number(this.getAttribute(name));
        const ticks = this.getAttribute('ticks').split(',').map(t => t.split(':'));
        const [top, bottom, first, step] = [num('top'), num('bottom'), num('first'), num('step')];
        let minor = '';
        for (let y = first; y < bottom; y += step) minor += `M0 ${Math.round(y)}.5h4`;
        return `
            <style>
                :host { display: block; height: ${num('height')}px; }
                svg { display: block; overflow: hidden; }
                text { fill: #ececec; font-size: 11px; }
                .title { font-size: 16px; text-anchor: middle; }
            </style>
            <svg width="100%" height="100%">
                <path stroke="#6a6a6a" fill="none" d="M.5 ${top}V${bottom}${minor}"/>
                ${ticks.map(([y, label]) => `
                    <path stroke="#999" d="M0 ${y}.5h6"/>
                    <text x="22" y="${Number(y) + 5}">${label}</text>`).join('')}
                <text class="title" transform="translate(${num('title-x')} ${num('title-y')}) rotate(90)">${this.getAttribute('title-text')}</text>
            </svg>`;
    }
}

class ColorBar extends BaseElement {
    render() {
        const stops = FIRE.map(([p, r, g, b]) => `<stop offset="${100 - p}%" stop-color="rgb(${r},${g},${b})"/>`).reverse().join('');
        const labels = ['60.000 M', '50.000 M', '40.000 M', '30.000 M', '20.000 M', '10.000 M', '0.00'];
        return `
            <style>
                :host { display: block; }
                svg { display: block; }
                text { fill: #ececec; font-size: 13px; text-anchor: end; }
                .title { text-anchor: start; }
            </style>
            <svg width="154" height="355">
                <defs><linearGradient id="fire" x2="0" y2="1">${stops}</linearGradient></defs>
                <rect x="119" y="20" width="26" height="321" fill="url(#fire)"/>
                ${labels.map((l, i) => `<text x="94" y="${Math.round(36 + i * 51.7)}">${l}</text>`).join('')}
                <text class="title" transform="translate(17 341) rotate(-90)">Volume (USDT)</text>
            </svg>`;
    }
}

const ICONS = {
    pan: '<path fill="#9a9a9a" d="M9 0l4 4h-3v4h4V5l4 4-4 4v-3h-4v4h3l-4 4-4-4h3v-4H4v3L0 9l4-4v3h4V4H5z"/>',
    box: '<rect x=".5" y=".5" width="17" height="17" stroke-dasharray="3 1"/><circle cx="12" cy="6" r="4.6" stroke-width="2" fill="#1e1e1e"/><path d="M9 10l-5 5" stroke-width="2.6"/>',
    wheel: '<rect x="1" y="3" width="6" height="12" rx="3" stroke-width="1.6"/><path d="M2 7h4M2 9h4M2 11h4"/><circle cx="13" cy="7" r="4" stroke-width="1.8"/><path d="M11 11l-2 5" stroke-width="2.2"/>',
    reset: '<path d="M3 7a6.5 6.5 0 0 1 12-1M15 11a6.5 6.5 0 0 1-12 1" stroke-width="2"/><path fill="#9a9a9a" stroke="none" d="M11.5 7h6.5l-2.5 4.5zM0 11h6.5l-4-4.5z"/>',
    save: '<path d="M.8.8h16.4v16.4H.8z" stroke-width="1.5"/><path d="M4 1v6h10V1" stroke-width="1.2"/><path d="M11 2.5v3" stroke-width="2"/>',
    hover: '<path d="M3.5 2h11a1.5 1.5 0 0 1 1.5 1.5v8.5l-4 1.2-3 3.3-3-3.3-4-1.2V3.5A1.5 1.5 0 0 1 3.5 2z" stroke-width="1.4"/><path d="M4 5h10M4 7.5h10M4 10h10" stroke-width="1.2"/>',
    cross: '<circle cx="9" cy="9" r="7.5" stroke-width="1.7"/><path d="M9 2v4.500M9 11.500V16M2 9h4.500M11.500 9H16" stroke-width="1.7"/>',
};

class PlotToolbar extends BaseElement {
    render() {
        const button = (icon, label, active = false) => `
            <button aria-label="${label}" ${active ? 'class="active"' : ''}>
                <svg width="18" height="18" viewBox="0 0 18 18" fill="none" stroke="#9a9a9a">${ICONS[icon]}</svg>
            </button>`;
        const petals = ['#f9e03c', '#8fc73e', '#1ea24a', '#1aa3b0', '#2b6fc4', '#7a3f9c', '#e02a6b', '#ea3a26', '#f58a24'];
        return `
            <style>
                :host { display: flex; flex-direction: column; width: 32px; }
                a, button {
                    box-sizing: border-box; height: 30px; padding: 0;
                    display: grid; place-items: center;
                    background: none; border: solid transparent; border-width: 0 2px;
                }
                .active { border-left-color: var(--accent); }
                hr { width: 10px; height: 1px; margin: 0 auto; border: 0; background: #e0e0e0; }
            </style>
            <a href="#" aria-label="Bokeh">
                <svg width="20" height="20" viewBox="-10 -10 20 20">
                    ${petals.map((c, i) => `<path fill="${c}" transform="rotate(${i * 40 - 60})" d="M-3-4.500L1.500-9.800 5.500-6 1.500-3.800z"/>`).join('')}
                </svg>
            </a>
            ${button('pan', 'Pan')}
            ${button('box', 'Box Zoom', true)}
            <hr>
            ${button('wheel', 'Wheel Zoom')}
            <hr>
            ${button('reset', 'Reset')}
            ${button('save', 'Save')}
            <hr>
            ${button('hover', 'Hover', true)}
            ${button('cross', 'Crosshair', true)}`;
    }
}

class PlotLegend extends BaseElement {
    render() {
        const row = keys => `
            <ul>${keys.map(k => `<li><i style="background: ${LINES[k].color}"></i>${LINES[k].label}</li>`).join('')}</ul>`;
        return `
            <style>
                :host { display: flex; flex-direction: column; gap: 20px; padding-top: 9px; font-size: 10px; }
                ul {
                    display: flex; align-items: center; gap: 15px; align-self: flex-start;
                    height: 40px; margin: 0; padding: 0 10px; list-style: none; background: #1d1d1d;
                }
                li { display: flex; align-items: center; gap: 8px; }
                i { width: 15px; height: 3px; }
            </style>
            ${row(['all', 's100', 's1k'])}
            ${row(['s10k', 's100k', 's1m'])}`;
    }
}

class FireChart extends BaseElement {
    render() {
        return `
            <style>
                :host {
                    display: grid;
                    grid-template-columns: 154px minmax(0, 1fr) 107px 32px;
                    padding: 0 15px 0 26px;
                }
                cvd-plot, plot-legend { grid-column: 2; }
                plot-toolbar { grid-row: 1 / 3; grid-column: 4; }
            </style>
            <color-bar></color-bar>
            <heatmap-plot></heatmap-plot>
            <value-axis height="355" top="10" bottom="351" first="12" step="8.87"
                ticks="12:0.120 M,56:0.110 M,101:0.100 M,145:90.00 k,190:80.00 k,234:70.00 k,278:60.00 k,323:50.00 k"
                title-x="82" title-y="181" title-text="Price (USDT)"></value-axis>
            <plot-toolbar></plot-toolbar>
            <cvd-plot></cvd-plot>
            <value-axis height="240" top="5" bottom="167" first="7" step="5.88"
                ticks="12:1.00,42:800.00 m,71:600.00 m,100:400.00 m,129:200.00 m,159:0.00"
                title-x="87" title-y="87" title-text="Normalized CVD (arb. u.)"></value-axis>
            <plot-legend></plot-legend>`;
    }
}

customElements.define('mi-dashboard', MiDashboard);
customElements.define('app-header', AppHeader);
customElements.define('nav-sidebar', NavSidebar);
customElements.define('nav-title', NavTitle);
customElements.define('nav-section', NavSection);
customElements.define('nav-link', NavLink);
customElements.define('user-panel', UserPanel);
customElements.define('chart-controls', ChartControls);
customElements.define('ticker-input', TickerInput);
customElements.define('percentile-slider', PercentileSlider);
customElements.define('radio-buttons', RadioButtons);
customElements.define('heatmap-plot', HeatmapPlot);
customElements.define('cvd-plot', CvdPlot);
customElements.define('value-axis', ValueAxis);
customElements.define('color-bar', ColorBar);
customElements.define('plot-toolbar', PlotToolbar);
customElements.define('plot-legend', PlotLegend);
customElements.define('fire-chart', FireChart);
</script>
</body>
</html>
